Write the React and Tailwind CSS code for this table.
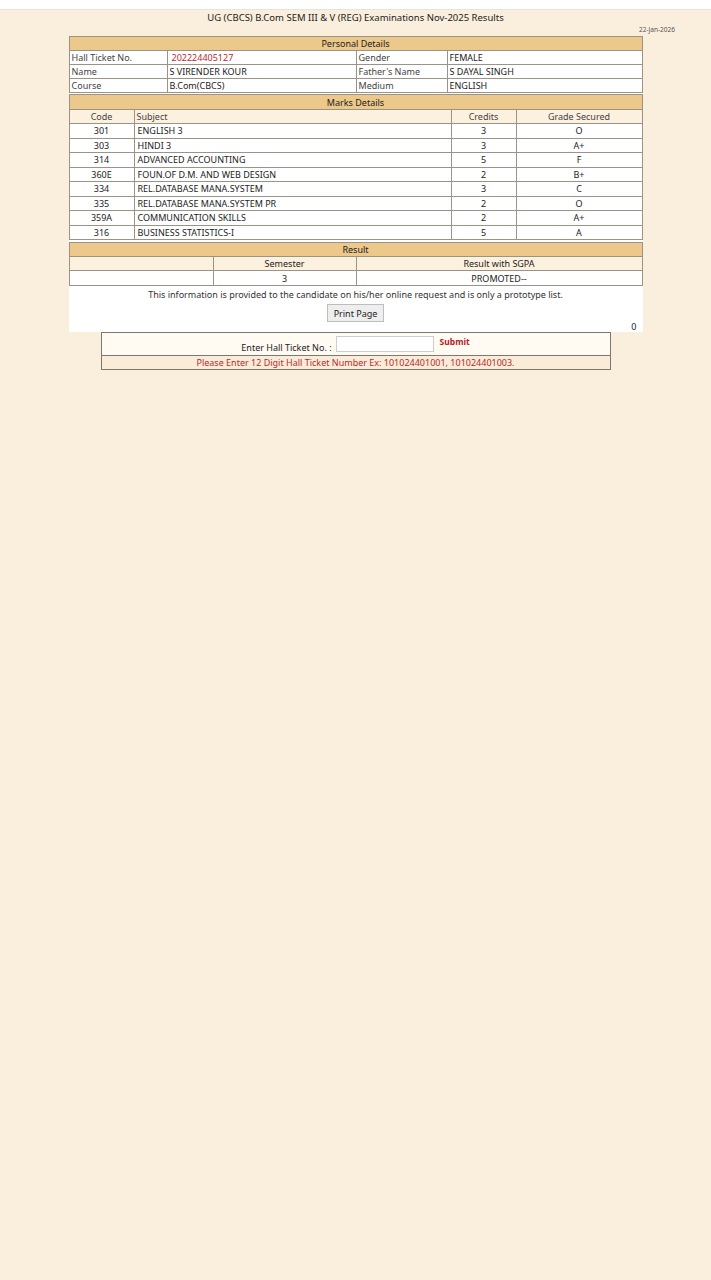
const personal = [
  ['Hall Ticket No.', '202224405127', 'Gender', 'FEMALE', true],
  ['Name', 'S VIRENDER KOUR', "Father's Name", 'S DAYAL SINGH'],
  ['Course', 'B.Com(CBCS)', 'Medium', 'ENGLISH'],
];

const marks = [
  ['301', 'ENGLISH 3', '3', 'O'],
  ['303', 'HINDI 3', '3', 'A+'],
  ['314', 'ADVANCED ACCOUNTING', '5', 'F'],
  ['360E', 'FOUN.OF D.M. AND WEB DESIGN', '2', 'B+'],
  ['334', 'REL.DATABASE MANA.SYSTEM', '3', 'C'],
  ['335', 'REL.DATABASE MANA.SYSTEM PR', '2', 'O'],
  ['359A', 'COMMUNICATION SKILLS', '2', 'A+'],
  ['316', 'BUSINESS STATISTICS-I', '5', 'A'],
];

const cell = 'border border-[#9a9488] px-[2px] leading-none';

export default function App() {
  return (
    <div
      className="min-h-screen bg-[#faefdc] text-[9px] text-[#222]"
      style={{ fontFamily: '"Noto Sans", "Open Sans", sans-serif' }}
    >
      <div className="h-[10px] bg-white border-b border-[#e6e2dc]" />

      <div className="pt-[2px] text-center text-[9.5px] leading-[12px]">
        UG (CBCS) B.Com SEM III &amp; V (REG) Examinations Nov-2025 Results
      </div>
      <div className="pr-[36px] pt-[1px] text-right text-[6.5px] leading-[9px] text-[#555]">
        22-Jan-2026
      </div>

      <div className="mx-auto mt-[2px] w-[574px] bg-white pb-[1px]">
        {/* Personal details */}
        <table className="w-full border-collapse table-fixed">
          <colgroup>
            <col className="w-[98px]" />
            <col className="w-[189px]" />
            <col className="w-[91px]" />
            <col />
          </colgroup>
          <tbody>
            <tr className="h-[14px] bg-[#ecc88b]">
              <td colSpan={4} className={`${cell} text-center`}>Personal Details</td>
            </tr>
            {personal.map(([a, b, c, d, red]) => (
              <tr key={a} className="h-[14px]">
                <td className={`${cell} text-[#444]`}>{a}</td>
                <td className={`${cell} ${red ? 'pl-[4px] text-[#c0282d]' : ''}`}>{b}</td>
                <td className={`${cell} text-[#444]`}>{c}</td>
                <td className={cell}>{d}</td>
              </tr>
            ))}
          </tbody>
        </table>

        {/* Marks details */}
        <table className="mt-[1px] w-full border-collapse table-fixed">
          <colgroup>
            <col className="w-[65px]" />
            <col className="w-[317px]" />
            <col className="w-[65px]" />
            <col />
          </colgroup>
          <tbody>
            <tr className="h-[15px] bg-[#ecc88b]">
              <td colSpan={4} className={`${cell} text-center`}>Marks Details</td>
            </tr>
            <tr className="h-[14px] bg-[#fcf0de]">
              <td className={`${cell} text-center text-[#444]`}>Code</td>
              <td className={`${cell} text-[#444]`}>Subject</td>
              <td className={`${cell} text-center text-[#444]`}>Credits</td>
              <td className={`${cell} text-center text-[#444]`}>Grade Secured</td>
            </tr>
            {marks.map(([code, subject, credits, grade]) => (
              <tr key={subject} className="h-[14.5px]">
                <td className={`${cell} text-center`}>{code}</td>
                <td className={`${cell} pl-[3px]`}>{subject}</td>
                <td className={`${cell} text-center`}>{credits}</td>
                <td className={`${cell} text-center`}>{grade}</td>
              </tr>
            ))}
          </tbody>
        </table>

        {/* Result */}
        <table className="mt-[2px] w-full border-collapse table-fixed">
          <colgroup>
            <col className="w-[144px]" />
            <col className="w-[143px]" />
            <col />
          </colgroup>
          <tbody>
            <tr className="h-[14px] bg-[#ecc88b]">
              <td colSpan={3} className={`${cell} text-center`}>Result</td>
            </tr>
            <tr className="h-[14px] bg-[#fcf0de]">
              <td className={cell}></td>
              <td className={`${cell} text-center`}>Semester</td>
              <td className={`${cell} text-center`}>Result with SGPA</td>
            </tr>
            <tr className="h-[15px]">
              <td className={cell}></td>
              <td className={`${cell} text-center`}>3</td>
              <td className={`${cell} text-center`}>PROMOTED--</td>
            </tr>
          </tbody>
        </table>

        <p className="mt-[3px] text-center leading-[11px] text-[#333]">
          This information is provided to the candidate on his/her online request and is only a prototype list.
        </p>
        <div className="mt-[4px] flex justify-center">
          <button className="h-[18px] w-[57px] border border-[#bdbdbd] bg-[#eeeeee] text-[9px] leading-none text-[#222]">
            Print Page
          </button>
        </div>
        <div className="pr-[6px] text-right leading-[9px]">0</div>
      </div>

      {/* Hall ticket form */}
      <div className="mx-auto w-[510px] border border-[#7d7770]">
        <div className="flex h-[22px] items-center justify-center bg-[#fffaf2]">
          <span className="mt-[8px] text-[#222]">Enter Hall Ticket No. :</span>
          <input
            type="text"
            className="ml-[4px] h-[16px] w-[98px] border border-[#ccc] bg-white"
          />
          <span className="ml-[6px] -mt-[4px] text-[8.5px] font-bold text-[#b5202a]">Submit</span>
        </div>
        <div className="flex h-[14px] items-center justify-center border-t border-[#7d7770] bg-[#f9edd9] text-[#c0282d]">
          Please Enter 12 Digit Hall Ticket Number Ex: 101024401001, 101024401003.
        </div>
      </div>
    </div>
  );
}
